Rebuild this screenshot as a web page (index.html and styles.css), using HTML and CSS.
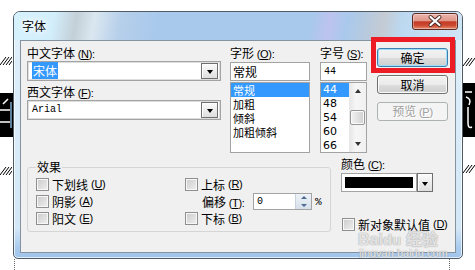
FILE: index.html
```html
<!DOCTYPE html>
<html lang="zh-CN">
<head>
    <meta charset="utf-8">
    <title>字体</title>
    <link rel="stylesheet" href="styles.css">
</head>
<body>
    <div class="desk">
        <svg class="deco hatch hl1" width="12" height="8"><path d="M0 8 L6 0 M3 8 L9 0 M6 8 L12 0 M9 8 L12 4" stroke="#000" stroke-width="1"/></svg>
        <svg class="deco hatch hl2" width="12" height="8"><path d="M0 8 L6 0 M3 8 L9 0 M6 8 L12 0 M9 8 L12 4" stroke="#000" stroke-width="1"/></svg>
        <svg class="deco hatch hr1" width="12" height="8"><path d="M0 8 L6 0 M3 8 L9 0 M6 8 L12 0" stroke="#000" stroke-width="1"/></svg>
        <svg class="deco hatch hr2" width="12" height="8"><path d="M0 8 L6 0 M3 8 L9 0 M6 8 L12 0" stroke="#000" stroke-width="1"/></svg>
        <svg class="deco bar-left" width="13" height="44"><rect width="13" height="44" fill="#000"/><path d="M3 11 L8 6 M0 17 H10 M0 29 H10" stroke="#fff" stroke-width="1.5"/><path d="M11 9 V35" stroke="#9fd4ff" stroke-width="1.2"/></svg>
        <svg class="deco bar-right" width="12" height="54"><rect width="12" height="54" fill="#000"/><path d="M2 9 H9 M3 14 Q9 16 6 22 M5 24 V40 Q5 46 9 44" stroke="#fff" stroke-width="1.5" fill="none"/></svg>
        <span class="deco dots dl"></span>
        <span class="deco dots dr"></span>

        <div class="window">
            <div class="titlebar">
                <span class="title">字体</span>
                <span class="close">
                    <svg width="46" height="17" viewBox="0 0 46 17">
                        <path d="M18.5 4 L27.5 12 M27.5 4 L18.5 12" stroke="#4a2a26" stroke-width="4" stroke-linecap="round"/>
                        <path d="M18.5 4 L27.5 12 M27.5 4 L18.5 12" stroke="#fff" stroke-width="2.2" stroke-linecap="round"/>
                    </svg>
                </span>
            </div>
            <div class="client">
                <div class="top">
                    <div class="col-font">
                        <div class="label">中文字体 <span class="key">(<u>N</u>):</span></div>
                        <div class="combo"><span class="value"><span class="sel">宋体</span></span><span class="drop"><i class="arrow"></i></span></div>
                        <div class="label second">西文字体 <span class="key">(<u>F</u>):</span></div>
                        <div class="combo"><span class="value mono">Arial</span><span class="drop"><i class="arrow"></i></span></div>
                    </div>
                    <div class="col-style">
                        <div class="label">字形 <span class="key">(<u>O</u>):</span></div>
                        <div class="edit">常规</div>
                        <ul class="list">
                            <li class="on">常规</li>
                            <li>加粗</li>
                            <li>倾斜</li>
                            <li>加粗倾斜</li>
                        </ul>
                    </div>
                    <div class="col-size">
                        <div class="label">字号 <span class="key">(<u>S</u>):</span></div>
                        <div class="edit mono">44</div>
                        <div class="list sizes">
                            <ul>
                                <li class="on">44</li>
                                <li>48</li>
                                <li>54</li>
                                <li>60</li>
                                <li>66</li>
                            </ul>
                            <div class="scroll">
                                <span class="sb-btn"><i class="up"></i></span>
                                <span class="thumb"></span>
                                <span class="sb-btn"><i class="down"></i></span>
                            </div>
                        </div>
                    </div>
                    <div class="col-buttons">
                        <div class="default-wrap">
                            <button class="btn default">确定</button>
                            <span class="mark"></span>
                        </div>
                        <button class="btn">取消</button>
                        <button class="btn" disabled>预览 <span class="key">(<u>P</u>)</span></button>
                    </div>
                </div>

                <div class="bottom">
                    <fieldset class="effects">
                        <legend>效果</legend>
                        <div class="grid">
                            <div class="check"><i class="box"></i>下划线 <span class="key">(<u>U</u>)</span></div>
                            <div class="check"><i class="box"></i>上标 <span class="key">(<u>R</u>)</span></div>
                            <div class="check"><i class="box"></i>阴影 <span class="key">(<u>A</u>)</span></div>
                            <div class="offset">
                                <span class="offset-label">偏移 <span class="key">(<u>T</u>):</span></span>
                                <span class="spin"><span class="mono">0</span><span class="spin-btns"><i class="up"></i><i class="down"></i></span></span>
                                <span class="pct">%</span>
                            </div>
                            <div class="check"><i class="box"></i>阳文 <span class="key">(<u>E</u>)</span></div>
                            <div class="check"><i class="box"></i>下标 <span class="key">(<u>B</u>)</span></div>
                        </div>
                    </fieldset>
                    <div class="color">
                        <div class="label">颜色 <span class="key">(<u>C</u>):</span></div>
                        <div class="color-combo">
                            <span class="field"><span class="swatch"></span></span>
                            <span class="drop"><i class="arrow"></i></span>
                        </div>
                        <div class="check newdef"><i class="box"></i>新对象默认值 <span class="key">(<u>D</u>)</span></div>
                    </div>
                </div>

                <div class="watermark">
                    <div class="wm-logo">Bai<span class="paw">du</span> 经验</div>
                    <div class="wm-url">jingyan.baidu.com</div>
                </div>
            </div>
        </div>
    </div>
</body>
</html>
```

FILE: styles.css
```css
* {
    margin: 0;
    padding: 0;
    box-sizing: border-box;
}
body {
    width: 475px;
    height: 270px;
    overflow: hidden;
    background: #fff;
    font-family: "Noto Sans CJK SC", sans-serif;
    font-size: 12px;
    color: #000;
}
.key {
    font-family: "Liberation Sans", sans-serif;
    font-size: 11px;
    letter-spacing: -0.3px;
}
u {
    text-decoration: underline;
    text-underline-offset: 1px;
}
.desk {
    position: relative;
    height: 270px;
    padding: 11px 0 0 13px;
}

/* bits of the page behind the dialog */
.deco {
    position: absolute;
    display: block;
}
.hl1 { left: 0; top: 57px; }
.hl2 { left: 0; top: 167px; }
.hr1 { left: 463px; top: 58px; }
.hr2 { left: 463px; top: 165px; }
.bar-left { left: 0; top: 93px; }
.bar-right { left: 463px; top: 83px; }
.dots {
    top: 259px;
    height: 11px;
    border-left: 1px dotted #666;
}
.dl { left: 14px; }
.dr { left: 449px; }

/* window frame */
.window {
    width: 450px;
    height: 248px;
    border: 1px solid #4f5b67;
    border-radius: 7px 7px 5px 5px;
    overflow: hidden;
    background: linear-gradient(#e0f0fb 0%, #d3e7f7 88%, #a8caee 96%, #a0c4ec 100%);
    box-shadow: inset 0 0 0 1px rgba(255,255,255,0.7);
    display: flex;
    flex-direction: column;
}
.titlebar {
    height: 28px;
    display: flex;
    align-items: flex-start;
    background: linear-gradient(100deg, #d6f2fd 0%, #d2eefb 9%, #c4d0d8 14%, #dbe7f0 18%, #b6cfea 24%, #a9c9ec 32%, #a8c8ec 66%, #bdc3ee 70%, #a9c9ec 74%, #c4cbd3 82%, #bcd8f0 86%, #cfe6f6 100%);
}
.title {
    margin: 7px 0 0 8px;
    line-height: 14px;
    text-shadow: 0 0 4px #fff, 0 0 8px #fff, 0 0 10px #fff;
}
.close {
    margin: 1px 4px 0 auto;
    width: 46px;
    height: 17px;
    border: 1px solid #5c2a22;
    border-radius: 3px;
    background: linear-gradient(#ebb5aa 0%, #e0978a 45%, #c43a25 52%, #cc4930 76%, #e48f72 100%);
    box-shadow: inset 0 0 0 1px rgba(255,255,255,0.35);
}
.close svg {
    display: block;
    margin: -1px;
}

/* client area */
.client {
    position: relative;
    margin: 0 6px;
    width: 436px;
    height: 213px;
    border: 1px solid #8592a0;
    background: #f0f0f0;
    padding: 4px 0 0 6px;
}
.label {
    line-height: 16px;
    height: 16px;
    white-space: nowrap;
}
.mono {
    font-family: "Liberation Mono", monospace;
    font-size: 10px;
}
.top {
    display: flex;
    align-items: flex-start;
}
.col-font {
    width: 194px;
}
.label.second {
    margin-top: 3px;
}
.combo {
    position: relative;
    height: 20px;
    border: 1px solid #a3a3a3;
    box-shadow: inset 0 0 0 1px #dedede;
    background: #fff;
    display: flex;
    align-items: center;
    padding: 0 2px 0 4px;
}
.combo .value {
    flex: 1;
    line-height: 14px;
}
.sel {
    background: #3399ff;
    color: #fff;
    padding: 0 1px;
}
.drop {
    flex-shrink: 0;
    width: 17px;
    height: 16px;
    border: 1px solid #6f6f6f;
    background: linear-gradient(#fbfbfb, #dedede);
    box-shadow: inset 1px 1px 0 #fff;
    display: flex;
    align-items: center;
    justify-content: center;
}
.arrow {
    display: block;
    width: 0;
    height: 0;
    margin-top: 2px;
    border-left: 3.5px solid transparent;
    border-right: 3.5px solid transparent;
    border-top: 4px solid #000;
}

.col-style {
    width: 80px;
    margin-left: 9px;
}
.col-size {
    width: 47px;
    margin-left: 10px;
}
.edit {
    margin-top: 1px;
    height: 19px;
    border: 1px solid #a3a3a3;
    background: #fff;
    line-height: 17px;
    padding-left: 2px;
}
.edit.mono {
    font-size: 10px;
    padding-left: 3px;
}
.list {
    list-style: none;
    margin-top: 1px;
    height: 71px;
    border: 1px solid #a3a3a3;
    background: #fff;
}
.list li {
    height: 14px;
    line-height: 14px;
    padding-left: 2px;
    font-size: 11px;
    white-space: nowrap;
}
.list li.on {
    background: #3399ff;
    color: #fff;
}
.list.sizes {
    display: flex;
}
.sizes ul {
    list-style: none;
    flex: 1;
}
.sizes li {
    font-family: "DejaVu Sans", sans-serif;
    font-size: 11px;
}
.scroll {
    width: 17px;
    display: flex;
    flex-direction: column;
    justify-content: space-between;
    align-items: center;
    background: linear-gradient(90deg, #e6e6e6, #f6f6f6 40%, #f0f0f0);
}
.sb-btn {
    height: 16px;
    width: 17px;
    display: flex;
    align-items: center;
    justify-content: center;
}
.up, .down {
    display: block;
    width: 0;
    height: 0;
    border-left: 3.5px solid transparent;
    border-right: 3.5px solid transparent;
}
.up {
    border-bottom: 4px solid #333;
}
.down {
    border-top: 4px solid #333;
}
.thumb {
    width: 15px;
    height: 15px;
    margin-top: -1px;
    border: 1px solid #979797;
    border-radius: 2px;
    background: linear-gradient(90deg, #f2f2f2, #e2e2e2 50%, #d0d0d0);
    box-shadow: inset 0 0 0 1px #fafafa;
}

.col-buttons {
    width: 71px;
    margin-left: 10px;
    padding-top: 3px;
}
.default-wrap {
    position: relative;
}
.btn {
    display: block;
    width: 71px;
    height: 19px;
    border: 1px solid #707070;
    border-radius: 3px;
    background: linear-gradient(#f2f2f2 0%, #ebebeb 50%, #dddddd 51%, #cfcfcf 100%);
    box-shadow: inset 0 0 0 1px #fbfbfb;
    font-family: "Noto Sans CJK SC", sans-serif;
    font-size: 12px;
    line-height: 16px;
    color: #000;
    margin-top: 8px;
}
.default-wrap .btn {
    margin-top: 0;
}
.btn.default {
    border-color: #3c7fb1;
    box-shadow: inset 0 0 0 1px #9fdcf8;
}
.btn:disabled {
    border-color: #adb2b5;
    background: #f4f4f4;
    box-shadow: none;
    color: #a0a0a0;
    text-shadow: 1px 1px 0 #fff;
}
.mark {
    position: absolute;
    left: -6px;
    top: -11px;
    right: -7px;
    bottom: -6px;
    border: 5px solid #ed1c24;
}

/* lower half */
.bottom {
    display: flex;
    align-items: flex-start;
    margin-top: 7px;
}
.effects {
    width: 304px;
    min-width: 0;
    border: 1px solid #d5d5d5;
    border-radius: 3px;
    padding: 0 0 4px 8px;
}
.effects legend {
    padding: 0 1px;
    line-height: 14px;
}
.grid {
    display: grid;
    grid-template-columns: 149px 1fr;
    grid-auto-rows: 17px;
    align-items: center;
    padding-top: 2px;
}
.check {
    display: flex;
    align-items: center;
    gap: 3px;
    white-space: nowrap;
    line-height: 17px;
}
.box {
    flex-shrink: 0;
    display: block;
    width: 13px;
    height: 13px;
    border: 1px solid #8e8f8f;
    background: linear-gradient(135deg, #cbcbcb, #efefef);
    box-shadow: inset 0 0 0 1px #f7f7f7;
}
.offset {
    display: flex;
    align-items: center;
    padding-left: 17px;
    white-space: nowrap;
}
.offset-label {
    width: 51px;
}
.spin {
    width: 59px;
    height: 17px;
    border: 1px solid #a3a3a3;
    background: #fff;
    display: flex;
    align-items: center;
    padding-left: 3px;
}
.spin .mono {
    flex: 1;
}
.spin-btns {
    width: 16px;
    height: 15px;
    display: flex;
    flex-direction: column;
    align-items: center;
    justify-content: space-around;
    background: linear-gradient(#eef3f8, #d6e0ea);
    border-left: 1px solid #c9d2dc;
}
.spin-btns .up {
    border-bottom-color: #4d6a92;
    border-left-width: 3px;
    border-right-width: 3px;
    border-bottom-width: 3px;
}
.spin-btns .down {
    border-top-color: #4d6a92;
    border-left-width: 3px;
    border-right-width: 3px;
    border-top-width: 3px;
}
.pct {
    margin-left: 3px;
    font-family: "Liberation Mono", monospace;
    font-size: 11px;
}

.color {
    width: 92px;
    margin-left: 10px;
}
.color .label {
    margin-top: -4px;
}
.color-combo {
    margin-top: 1px;
    height: 19px;
    display: flex;
}
.color-combo .field {
    flex: 1;
    border: 1px solid #a3a3a3;
    background: #fff;
    padding: 3px;
}
.swatch {
    display: block;
    height: 11px;
    background: #000;
}
.color-combo .drop {
    width: 16px;
    height: 19px;
}
.newdef {
    margin-top: 24px;
    margin-left: 1px;
}

.watermark {
    position: absolute;
    left: 337px;
    top: 191px;
    color: rgba(255,255,255,0.7);
    text-shadow: 0 0 1px #a5a5a5, 0 0 1px #a5a5a5;
    pointer-events: none;
}
.wm-logo {
    font-family: "Liberation Sans", sans-serif;
    font-weight: bold;
    font-size: 16px;
    line-height: 15px;
    white-space: nowrap;
}
.wm-logo .paw {
    font-size: 15px;
}
.wm-url {
    font-family: "Liberation Sans", sans-serif;
    font-size: 11px;
    line-height: 12px;
    padding-left: 1px;
}
```
